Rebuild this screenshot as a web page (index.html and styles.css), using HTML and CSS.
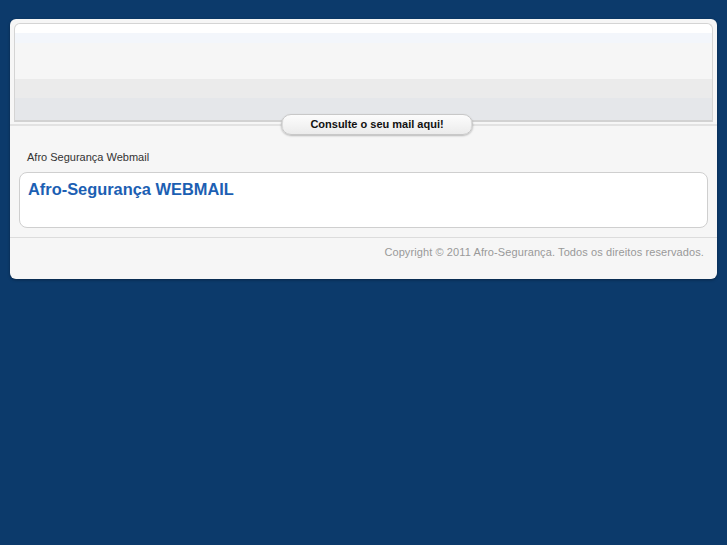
FILE: index.html
```html
<!DOCTYPE html>
<html lang="pt">
<head>
<meta charset="utf-8">
<title>Afro Segurança Webmail</title>
<link rel="stylesheet" href="styles.css">
</head>
<body>
<div class="card">
  <div class="header">
    <div class="banner"></div>
  </div>
  <div class="navbar">
    <a class="btn" href="#">Consulte o seu mail aqui!</a>
  </div>
  <div class="breadcrumb">Afro Segurança Webmail</div>
  <div class="content">
    <h1 class="title">Afro-Segurança WEBMAIL</h1>
  </div>
  <div class="footer">Copyright © 2011 Afro-Segurança. Todos os direitos reservados.</div>
</div>
</body>
</html>
```
FILE: styles.css
```css
html, body {
  margin: 0;
  padding: 0;
}
body {
  background: #0c3a6b;
  font-family: "Liberation Sans", Arial, sans-serif;
  padding: 19px 10px;
}
.card {
  width: 707px;
  height: 260px;
  box-sizing: border-box;
  background: #f6f6f6;
  border-radius: 6px;
  box-shadow: 0 1px 3px rgba(0,0,0,0.35);
  display: flex;
  flex-direction: column;
}
.header {
  padding: 4px 4px 0;
}
.banner {
  height: 96px;
  border: 1px solid #d4d4d4;
  border-bottom: 2px solid #d2d2d2;
  border-radius: 6px 6px 0 0;
  background: linear-gradient(to bottom,
    #ffffff 0px, #ffffff 9px,
    #f3f6fb 9px, #f3f6fb 19px,
    #f6f6f6 19px, #f6f6f6 55px,
    #ebebeb 55px, #ebebeb 74px,
    #e5e7ea 74px, #e5e7ea 96px);
}
.navbar {
  margin-top: 2px;
  border-top: 2px solid #e2e2e2;
  display: flex;
  justify-content: center;
}
.btn {
  margin-top: -12px;
  margin-left: 27px;
  width: 190px;
  height: 19px;
  border: 1px solid #c8c8c8;
  border-radius: 10px;
  background: linear-gradient(to bottom, #fcfcfc 0%, #f4f4f4 50%, #ebebeb 100%);
  box-shadow: 0 1px 2px rgba(0,0,0,0.25), inset 13px 0 0 -12px #dcdcdc, inset -13px 0 0 -12px #dcdcdc;
  font-size: 11px;
  font-weight: bold;
  color: #111;
  text-decoration: none;
  display: flex;
  align-items: center;
  justify-content: center;
  line-height: 19px;
}
.breadcrumb {
  margin-top: 15px;
  padding-left: 17px;
  font-size: 11px;
  line-height: 14px;
  color: #333;
}
.content {
  margin: 8px 9px 0;
  height: 54px;
  background: #fff;
  border: 1px solid #cfcfcf;
  border-radius: 8px;
  padding: 0 8px;
}
.title {
  margin: 6px 0 0;
  font-size: 16.4px;
  line-height: 20px;
  font-weight: bold;
  color: #1c5fb3;
}
.footer {
  margin-top: 9px;
  border-top: 1px solid #dcdcdc;
  padding: 6px 13px 0 0;
  text-align: right;
  font-size: 11px;
  line-height: 16px;
  color: #999;
  letter-spacing: 0.1px;
}
```
